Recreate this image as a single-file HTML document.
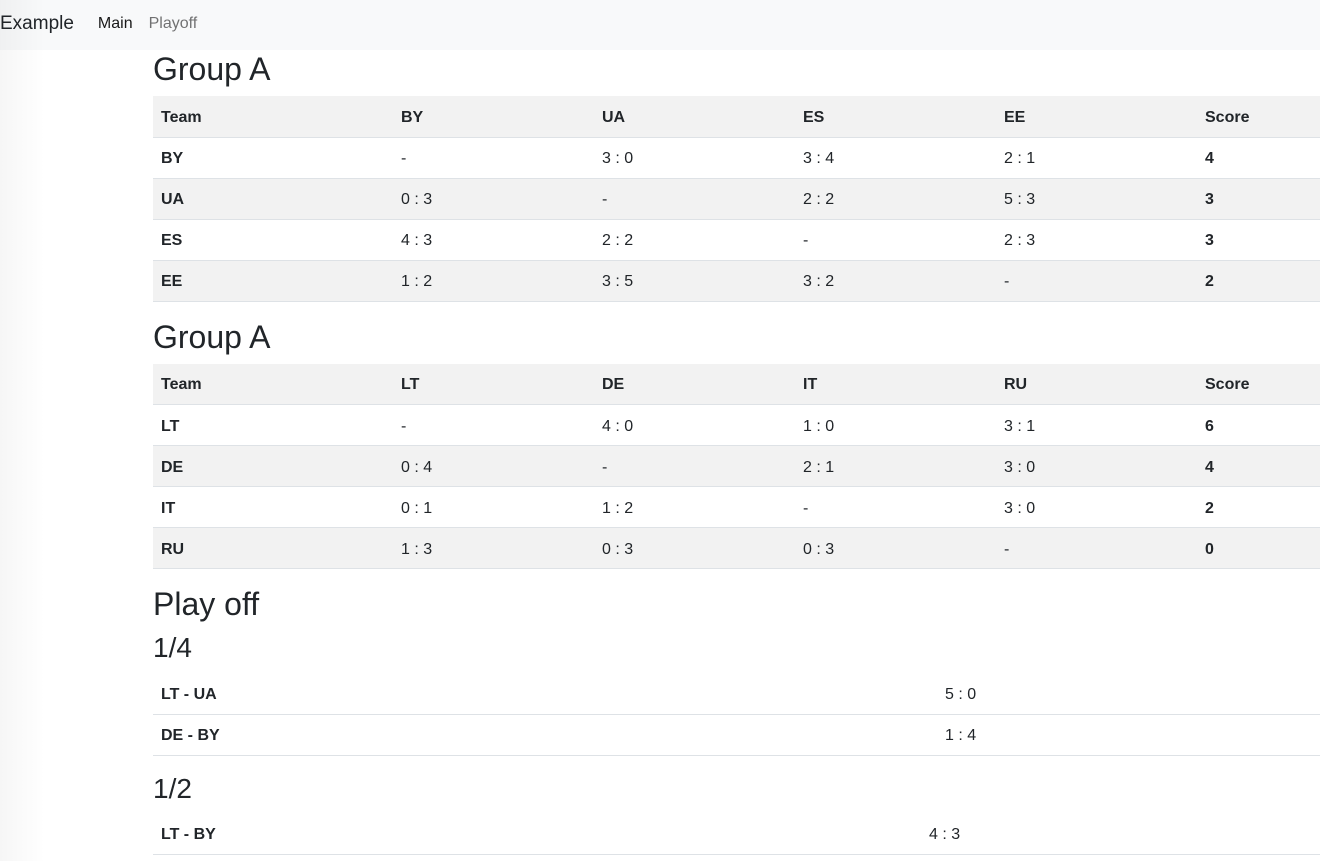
<!DOCTYPE html>
<html><head><meta charset="utf-8"><style>
*{box-sizing:border-box}
body{margin:0;font-family:"Liberation Sans",Arial,sans-serif;font-size:16px;color:#212529;background:#fff;overflow:hidden;width:1320px;height:861px;position:relative}
.nav{height:50px;background:#f8f9fa;display:flex;align-items:center;padding-bottom:2px}
.brand{font-size:19px;margin-right:24px;margin-left:0}
.nav a{font-size:16px;margin-right:16px;color:rgba(0,0,0,.9)}
.nav a.m{color:rgba(0,0,0,.55)}
.shade{position:absolute;left:0;top:0;width:45px;height:861px;background:linear-gradient(to right,rgba(0,0,0,.035),rgba(0,0,0,0))}
.c{margin-left:153px}
h2{font-size:32px;font-weight:500;line-height:38px;margin:0 0 8px}
h3{font-size:28px;font-weight:500;line-height:34px;margin:0 0 8px}
table{border-collapse:collapse;margin-bottom:16px}
td,th{height:41px;padding:3px 8px 0;text-align:left;border-top:1px solid #dee2e6;vertical-align:middle}
th,td.b{font-weight:bold}
.g{width:1245px;table-layout:fixed}
.g tr:nth-child(odd) td,.g tr.h th{background:#f2f2f2}
.g th{width:201px}
.g th:first-child{width:240px}
.g tr.h th{border-top:none;border-bottom:1px solid #dee2e6}
.g tr:last-child td{border-bottom:1px solid #dee2e6}
.p{width:1200px}
.p tr:last-child td{border-bottom:1px solid #dee2e6}
.p tr:first-child td{border-top:none}
</style></head><body>
<div class="shade"></div>
<div class="nav"><span class="brand">Example</span><a>Main</a><a class="m">Playoff</a></div>
<div class="c">
<h2>Group A</h2>
<table class="g">
<tr class="h"><th>Team</th><th>BY</th><th>UA</th><th>ES</th><th>EE</th><th>Score</th></tr>
<tr><td class="b">BY</td><td>-</td><td>3 : 0</td><td>3 : 4</td><td>2 : 1</td><td class="b">4</td></tr>
<tr><td class="b">UA</td><td>0 : 3</td><td>-</td><td>2 : 2</td><td>5 : 3</td><td class="b">3</td></tr>
<tr><td class="b">ES</td><td>4 : 3</td><td>2 : 2</td><td>-</td><td>2 : 3</td><td class="b">3</td></tr>
<tr><td class="b">EE</td><td>1 : 2</td><td>3 : 5</td><td>3 : 2</td><td>-</td><td class="b">2</td></tr>
</table>
<h2>Group A</h2>
<table class="g">
<tr class="h"><th>Team</th><th>LT</th><th>DE</th><th>IT</th><th>RU</th><th>Score</th></tr>
<tr><td class="b">LT</td><td>-</td><td>4 : 0</td><td>1 : 0</td><td>3 : 1</td><td class="b">6</td></tr>
<tr><td class="b">DE</td><td>0 : 4</td><td>-</td><td>2 : 1</td><td>3 : 0</td><td class="b">4</td></tr>
<tr><td class="b">IT</td><td>0 : 1</td><td>1 : 2</td><td>-</td><td>3 : 0</td><td class="b">2</td></tr>
<tr><td class="b">RU</td><td>1 : 3</td><td>0 : 3</td><td>0 : 3</td><td>-</td><td class="b">0</td></tr>
</table>
<h2>Play off</h2>
<h3>1/4</h3>
<table class="p">
<tr><td class="b" style="width:784px">LT - UA</td><td>5 : 0</td></tr>
<tr><td class="b">DE - BY</td><td>1 : 4</td></tr>
</table>
<h3>1/2</h3>
<table class="p">
<tr><td class="b" style="width:768px">LT - BY</td><td>4 : 3</td></tr>
</table>
</div>
</body></html>
